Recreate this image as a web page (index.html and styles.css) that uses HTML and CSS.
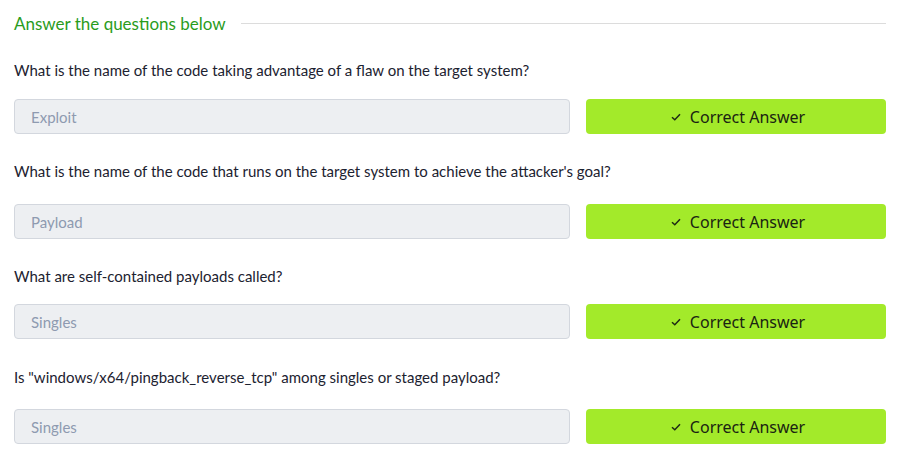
FILE: index.html
```html
<!DOCTYPE html>
<html>
<head>
<meta charset="utf-8">
<link rel="stylesheet" href="styles.css">
</head>
<body>
<div class="page">
  <div class="heading">
    <span class="heading-text">Answer the questions below</span>
    <span class="heading-rule"></span>
  </div>

  <div class="question q1">
    <p class="q-text">What is the name of the code taking advantage of a flaw on the target system?</p>
    <div class="answer-row">
      <div class="answer-input">Exploit</div>
      <button class="answer-btn"><svg class="check" viewBox="0 0 10 8" width="10" height="8"><path d="M1 4.2 L3.8 6.8 L9 1.2" fill="none" stroke="#1d2a14" stroke-width="1.5"/></svg>Correct Answer</button>
    </div>
  </div>

  <div class="question q2">
    <p class="q-text">What is the name of the code that runs on the target system to achieve the attacker's goal?</p>
    <div class="answer-row">
      <div class="answer-input">Payload</div>
      <button class="answer-btn"><svg class="check" viewBox="0 0 10 8" width="10" height="8"><path d="M1 4.2 L3.8 6.8 L9 1.2" fill="none" stroke="#1d2a14" stroke-width="1.5"/></svg>Correct Answer</button>
    </div>
  </div>

  <div class="question q3">
    <p class="q-text">What are self-contained payloads called?</p>
    <div class="answer-row">
      <div class="answer-input">Singles</div>
      <button class="answer-btn"><svg class="check" viewBox="0 0 10 8" width="10" height="8"><path d="M1 4.2 L3.8 6.8 L9 1.2" fill="none" stroke="#1d2a14" stroke-width="1.5"/></svg>Correct Answer</button>
    </div>
  </div>

  <div class="question q4">
    <p class="q-text">Is "windows/x64/pingback_reverse_tcp" among singles or staged payload?</p>
    <div class="answer-row">
      <div class="answer-input">Singles</div>
      <button class="answer-btn"><svg class="check" viewBox="0 0 10 8" width="10" height="8"><path d="M1 4.2 L3.8 6.8 L9 1.2" fill="none" stroke="#1d2a14" stroke-width="1.5"/></svg>Correct Answer</button>
    </div>
  </div>
</div>
</body>
</html>
```

FILE: styles.css
```css
html, body {
  margin: 0;
  padding: 0;
  background: #ffffff;
}

.page {
  width: 872px;
  padding: 11px 0 0 14px;
  font-family: Lato, "Liberation Sans", sans-serif;
}

.heading {
  display: flex;
  align-items: center;
  height: 24px;
}

.heading-text {
  font-size: 17px;
  color: #2a9c1c;
  white-space: nowrap;
}

.heading-rule {
  flex: 1;
  height: 1px;
  background: #dcdcdc;
  margin-left: 15px;
}

.question {
  display: flex;
  flex-direction: column;
}

.q-text {
  margin: 0;
  font-size: 15px;
  line-height: 20px;
  color: #1c2230;
}

.q1 { margin-top: 25px; }
.q2 { margin-top: 27px; }
.q3 { margin-top: 27px; }
.q4 { margin-top: 28px; }

.q1 .answer-row { margin-top: 19px; }
.q2 .answer-row { margin-top: 23px; }
.q3 .answer-row { margin-top: 18px; }
.q4 .answer-row { margin-top: 22px; }

.answer-row {
  display: flex;
  gap: 16px;
  height: 35px;
}

.answer-input {
  width: 556px;
  box-sizing: border-box;
  height: 35px;
  background: #edeff2;
  border: 1px solid #d3d7de;
  border-radius: 4px;
  padding-left: 16px;
  display: flex;
  align-items: center;
  font-size: 15px;
  color: #8e9ab0;
}

.answer-btn {
  width: 300px;
  height: 35px;
  border: none;
  border-radius: 4px;
  background: #a3ea2a;
  display: flex;
  align-items: center;
  justify-content: center;
  gap: 9px;
  font-family: "Noto Sans", "Open Sans", sans-serif;
  font-size: 16px;
  color: #1a2412;
  padding: 0;
}

.check {
  display: block;
  margin-left: 4px;
}
```
